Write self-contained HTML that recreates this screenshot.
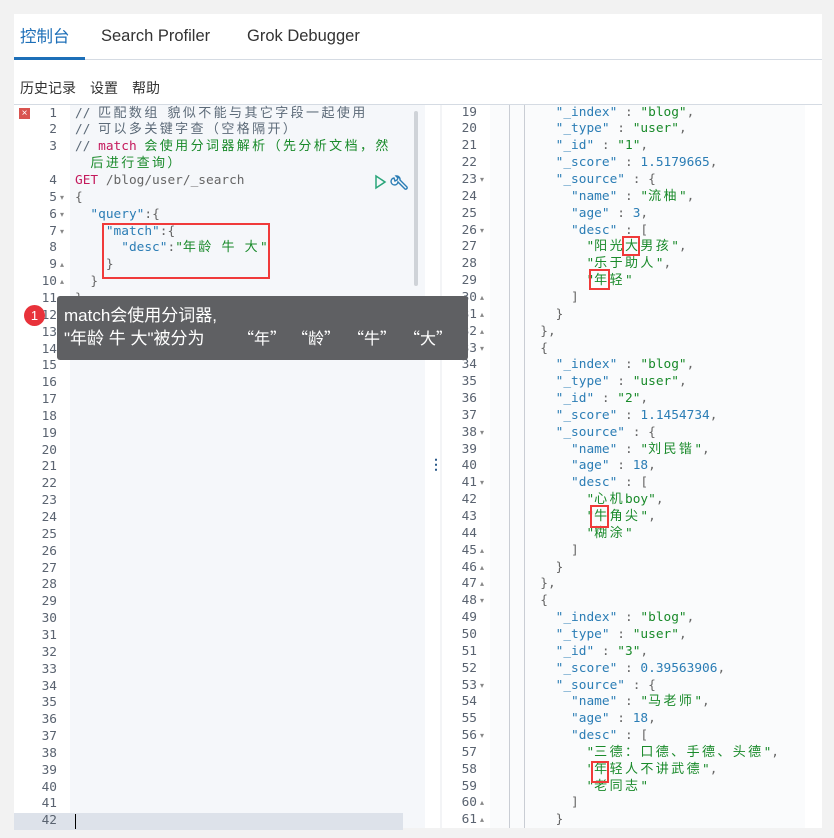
<!DOCTYPE html>
<html><head><meta charset="utf-8"><style>
body{margin:0;width:834px;height:838px;background:#f2f2f2;position:relative;overflow:hidden;font-family:"Liberation Sans","Noto Sans CJK SC",sans-serif}
.panel{position:absolute;left:14px;top:14px;width:808px;height:814px;background:#fff}
.a{position:absolute;white-space:pre}
.m{font-family:"DejaVu Sans Mono","Noto Sans CJK SC",monospace;font-size:12.8px;line-height:16.85px;height:16.85px}
.cj{font-family:"Noto Sans CJK SC",sans-serif;font-size:13px;letter-spacing:2.4px;line-height:0}
.n{color:#5a6370;text-align:right;width:40px}
.k{color:#2b7db5}.s{color:#198a2a}.p{color:#666}.r{color:#c4195c}.c{color:#5c6a78}.num{color:#2b7db5}
.f{font-size:8px;color:#888}
.box{position:absolute;border:2px solid #f03a3a}
.g{position:absolute;width:1px;background:#c9cdd4}
.tt{position:absolute;font-size:17px;color:#fff;white-space:pre;top:327px;line-height:23px}
.q{font-family:"Noto Sans CJK SC",sans-serif;font-size:16px;top:326px}
</style></head><body>
<div class="panel"></div>
<div class="a" style="left:20px;top:25px;font-size:16.5px;color:#1d6fb8;line-height:24px">控制台</div>
<div class="a" style="left:101px;top:27px;font-size:16.5px;color:#333">Search Profiler</div>
<div class="a" style="left:247px;top:27px;font-size:16.5px;color:#333">Grok Debugger</div>
<div style="position:absolute;left:14px;top:59px;width:808px;height:1px;background:#d5dbe3"></div>
<div style="position:absolute;left:14px;top:57px;width:71px;height:3px;background:#1d6fb8"></div>
<div class="a" style="left:20px;top:78px;font-size:14px;color:#333">历史记录　设置　帮助</div>
<div style="position:absolute;left:14px;top:104px;width:808px;height:1px;background:#d5dbe3"></div>
<div style="position:absolute;left:70px;top:105px;width:355px;height:723px;background:#f5f7fa"></div>
<div style="position:absolute;left:14px;top:813px;width:389px;height:17px;background:#dde2ea"></div>
<div style="position:absolute;left:414px;top:111px;width:4px;height:175px;background:#cfd3d8;border-radius:2px"></div>
<div style="position:absolute;left:19px;top:108px;width:11px;height:11px;background:#d9534f;color:#fff;font-size:10px;line-height:11px;text-align:center">×</div>
<svg style="position:absolute;left:372px;top:173px" width="40" height="20"><path d="M4 3 L13 9 L4 15 Z" fill="none" stroke="#2aa57a" stroke-width="1.5"/><path d="M22 5 a3.5 3.5 0 1 0 4 4 L33 16 a1.5 1.5 0 0 0 2-2 L28 7 a3.5 3.5 0 0 0-4-4 l2 2 -1 2 -2 1z" fill="none" stroke="#2b7db5" stroke-width="1.4"/></svg>
<div id="L"></div>
<div style="position:absolute;left:440px;top:105px;width:2px;height:723px;background:#f3f4f6"></div>
<div style="position:absolute;left:490px;top:105px;width:315px;height:723px;background:#fafbfc"></div>
<div class="a" style="left:429px;top:456px;font-size:14px;color:#2b5a8a;font-weight:bold">⋮</div>
<div id="R"></div>
<div style="position:absolute;left:57px;top:296px;width:411px;height:64px;background:#5f6063;border-radius:3px"></div>
<div class="a" style="left:64px;top:304px;font-size:17px;color:#fff;line-height:23px">match会使用分词器,</div>
<div class="tt" style="left:64px">"年龄 牛 大"被分为</div>
<div class="tt q" style="left:238px">“年”</div>
<div class="tt q" style="left:292px">“龄”</div>
<div class="tt q" style="left:348px">“牛”</div>
<div class="tt q" style="left:404px">“大”</div>
<div style="position:absolute;left:24px;top:305px;width:21px;height:21px;border-radius:50%;background:#e8323a;color:#fff;font-size:13px;line-height:21px;text-align:center">1</div>
<div class="box" style="left:102px;top:223px;width:164px;height:52px"></div>
<div class="box" style="left:622px;top:236px;width:14px;height:16px"></div>
<div class="box" style="left:589px;top:269px;width:17px;height:17px"></div>
<div class="box" style="left:590px;top:505px;width:15px;height:19px"></div>
<div class="box" style="left:591px;top:761px;width:14px;height:18px"></div>
<script>
function cj(s){return s.replace(/([\u3000-\u9fff\uff00-\uffef]+)/g,'<span class="cj">$1</span>')}
var L=document.getElementById('L'),h='';
var top0=105.6,lh=16.85;
var left=[
[1,'<span class="c">// 匹配数组 貌似不能与其它字段一起使用</span>'],
[2,'<span class="c">// 可以多关键字查（空格隔开）</span>'],
[3,'<span class="c">// </span><span class="r">match</span><span class="s"> 会使用分词器解析（先分析文档，然</span>'],
['','<span class="s">  后进行查询）</span>'],
[4,'<span class="r">GET</span><span class="p"> /blog/user/_search</span>'],
[5,'<span class="p">{</span>'],
[6,'  <span class="k">"query"</span><span class="p">:{</span>'],
[7,'    <span class="k">"match"</span><span class="p">:{</span>'],
[8,'      <span class="k">"desc"</span><span class="p">:</span><span class="s">"年龄 牛 大"</span>'],
[9,'    <span class="p">}</span>'],
[10,'  <span class="p">}</span>'],
[11,'<span class="p">}</span>']];
var folds={5:'▾',6:'▾',7:'▾',9:'▴',10:'▴',11:'▴'};
for(var i=12;i<=42;i++)left.push([i,'']);
left.forEach(function(l,r){var y=top0+r*lh;
h+='<div class="a m n" style="left:17px;top:'+y+'px">'+l[0]+'</div>';
if(folds[l[0]])h+='<div class="a f" style="left:60px;top:'+(y+3)+'px">'+folds[l[0]]+'</div>';
h+='<div class="a m" style="left:75px;top:'+y+'px">'+cj(l[1])+'</div>';});
h+='<div style="position:absolute;left:75px;top:814px;width:1px;height:15px;background:#000"></div>';
L.innerHTML=h;
var R=document.getElementById('R');h='';
function kv(k,v,cls){return '<span class="k">"'+k+'"</span><span class="p"> : </span>'+(cls?'<span class="'+cls+'">'+v+'</span>':'<span class="p">'+v+'</span>')}
function sp(n){return ' '.repeat(n)}
var rl=[];
function doc(id,score,name,age,descs,last){
rl.push([8,kv('_index','"blog"','s')+'<span class="p">,</span>']);
rl.push([8,kv('_type','"user"','s')+'<span class="p">,</span>']);
rl.push([8,kv('_id','"'+id+'"','s')+'<span class="p">,</span>']);
rl.push([8,kv('_score',score,'num')+'<span class="p">,</span>']);
rl.push([8,kv('_source','{')]);
rl.push([10,kv('name','"'+name+'"','s')+'<span class="p">,</span>']);
rl.push([10,kv('age',age,'num')+'<span class="p">,</span>']);
rl.push([10,kv('desc','[')]);
descs.forEach(function(d,i){rl.push([12,'<span class="s">"'+d+'"</span>'+(i<descs.length-1?'<span class="p">,</span>':'')])});
rl.push([10,'<span class="p">]</span>']);
rl.push([8,'<span class="p">}</span>']);
if(!last){rl.push([6,'<span class="p">},</span>']);rl.push([6,'<span class="p">{</span>']);}
}
doc('1','1.5179665','流柚','3',['阳光大男孩','乐于助人','年轻']);
doc('2','1.1454734','刘民锴','18',['心机boy','牛角尖','糊涂']);
doc('3','0.39563906','马老师','18',['三德：口德、手德、头德','年轻人不讲武德','老同志'],true);
var rf={23:'▾',26:'▾',30:'▴',31:'▴',32:'▴',33:'▾',38:'▾',41:'▾',45:'▴',46:'▴',47:'▴',48:'▾',53:'▾',56:'▾',60:'▴',61:'▴'};
var t1=104.6;
rl.forEach(function(l,r){var y=t1+r*lh,n=19+r;
h+='<div class="a m n" style="left:437px;top:'+y+'px">'+n+'</div>';
if(rf[n])h+='<div class="a f" style="left:480px;top:'+(y+3)+'px">'+rf[n]+'</div>';
h+='<div class="a m" style="left:494px;top:'+y+'px">'+sp(l[0])+cj(l[1])+'</div>';});
[509,524].forEach(function(x){h+='<div class="g" style="left:'+x+'px;top:105px;height:723px"></div>'});
R.innerHTML=h;
</script>
</body></html>
